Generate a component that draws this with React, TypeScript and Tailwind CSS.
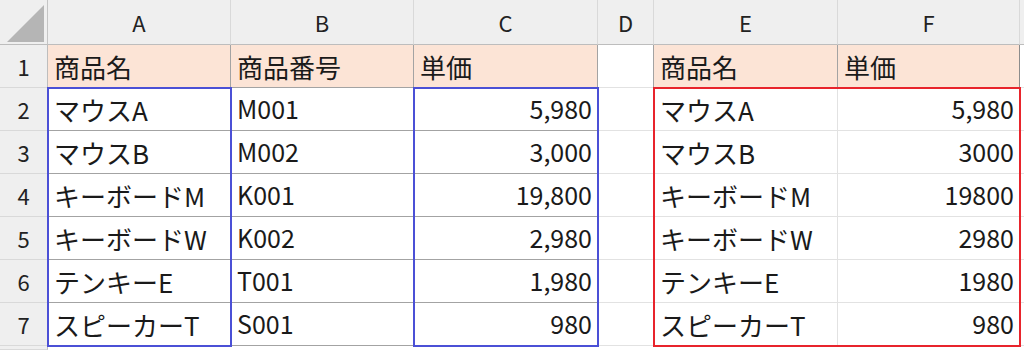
import React from "react";

const FONT = { fontFamily: '"Noto Sans CJK JP", "Noto Sans", sans-serif' };

const COLS = ["A", "B", "C", "D", "E", "F"];

// row data: A, B, C, E, F
const ROWS = [
  ["マウスA", "M001", "5,980", "マウスA", "5,980"],
  ["マウスB", "M002", "3,000", "マウスB", "3000"],
  ["キーボードM", "K001", "19,800", "キーボードM", "19800"],
  ["キーボードW", "K002", "2,980", "キーボードW", "2980"],
  ["テンキーE", "T001", "1,980", "テンキーE", "1980"],
  ["スピーカーT", "S001", "980", "スピーカーT", "980"],
];

const GRID =
  "grid grid-cols-[48px_183px_183px_184px_56px_184px_182px_4px] grid-rows-[45px_repeat(7,43px)_4px]";

const DARK = "border-r-[#a3a3a3]";
const DARK_B = "border-b-[#a3a3a3]";
const LIGHT = "border-r-[#e2e2e2]";
const LIGHT_B = "border-b-[#e2e2e2]";

function Cell({
  children,
  right,
  jp,
  fill,
  r,
  b,
}: {
  children?: React.ReactNode;
  right?: boolean;
  jp?: boolean;
  fill?: boolean;
  r: string;
  b: string;
}) {
  return (
    <div
      className={`flex items-center overflow-hidden whitespace-nowrap border-r border-b text-[#1a1a1a] ${r} ${b} ${
        jp ? "text-[26px]" : "text-[25px]"
      } ${right ? "justify-end pr-[5px]" : "pl-[6px]"} ${fill ? "bg-[#fce4d6]" : "bg-white"}`}
    >
      {children}
    </div>
  );
}

function RowHead({ n }: { n?: number }) {
  return (
    <div className="flex items-center justify-center border-r border-b border-r-[#bdbdbd] border-b-[#d9d9d9] bg-[#efefef] text-[22px] text-[#222]">
      {n}
    </div>
  );
}

export default function App() {
  return (
    <div className="grid h-[350px] w-[1024px] overflow-hidden bg-white" style={FONT}>
      <div className={`${GRID} [grid-area:1/1]`}>
        {/* header row */}
        <div className="relative border-r border-b border-r-[#c4c4c4] border-b-[#bdbdbd] bg-[#efefef]">
          <svg className="absolute right-[3px] bottom-[2px]" width="37" height="37" viewBox="0 0 37 37">
            <polygon points="0,37 37,37 37,0" fill="#b5b5b5" />
          </svg>
        </div>
        {COLS.map((c) => (
          <div
            key={c}
            className="flex items-center justify-center border-r border-b border-r-[#d9d9d9] border-b-[#bdbdbd] bg-[#efefef] text-[22px] text-[#222]"
          >
            {c}
          </div>
        ))}
        <div className="border-b border-b-[#bdbdbd] bg-[#efefef]" />

        {/* row 1 */}
        <RowHead n={1} />
        <Cell jp fill r={DARK} b={DARK_B}>商品名</Cell>
        <Cell jp fill r={DARK} b={DARK_B}>商品番号</Cell>
        <Cell jp fill r={DARK} b={DARK_B}>単価</Cell>
        <Cell r={DARK} b={LIGHT_B} />
        <Cell jp fill r={DARK} b={DARK_B}>商品名</Cell>
        <Cell jp fill r="border-r-[#8c8c8c]" b={DARK_B}>単価</Cell>
        <div className="border-b border-b-[#e2e2e2]" />

        {/* rows 2-7 */}
        {ROWS.map((row, i) => (
          <React.Fragment key={i}>
            <RowHead n={i + 2} />
            <Cell jp r={DARK} b={DARK_B}>{row[0]}</Cell>
            <Cell r={DARK} b={DARK_B}>{row[1]}</Cell>
            <Cell right r={DARK} b={DARK_B}>{row[2]}</Cell>
            <Cell r={LIGHT} b={LIGHT_B} />
            <Cell jp r={LIGHT} b={LIGHT_B}>{row[3]}</Cell>
            <Cell right r={DARK} b={LIGHT_B}>{row[4]}</Cell>
            <div className="border-b border-b-[#e2e2e2]" />
          </React.Fragment>
        ))}
        <RowHead />
      </div>

      {/* selection outlines, same grid laid over the sheet */}
      <div className={`${GRID} pointer-events-none relative z-10 [grid-area:1/1]`}>
        <div className="col-start-2 row-start-3 row-span-6 -m-px border-2 border-[#4b50d6]" />
        <div className="col-start-4 row-start-3 row-span-6 -m-px border-2 border-[#4b50d6]" />
        <div className="col-start-6 col-span-2 row-start-3 row-span-6 -m-px border-2 border-[#e8242c]" />
      </div>
    </div>
  );
}
